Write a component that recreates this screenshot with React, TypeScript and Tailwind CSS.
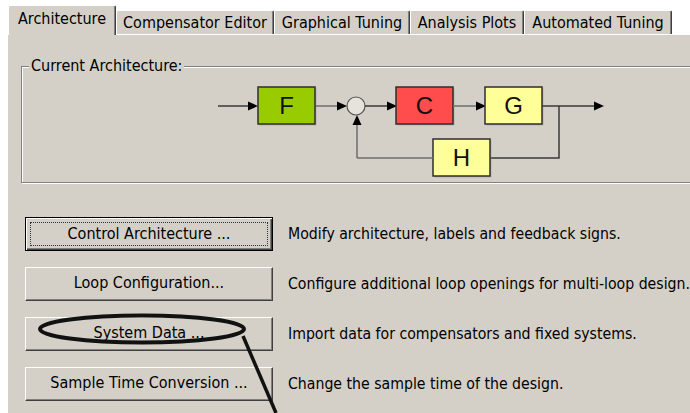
const tabs = [
  { label: "Architecture", w: "w-[108px]", active: true },
  { label: "Compensator Editor", w: "w-[158px]", active: false },
  { label: "Graphical Tuning", w: "w-[136px]", active: false },
  { label: "Analysis Plots", w: "w-[114px]", active: false },
  { label: "Automated Tuning", w: "w-[148px]", active: false },
];

const actions = [
  { label: "Control Architecture ...", desc: "Modify architecture, labels and feedback signs.", isDefault: true },
  { label: "Loop Configuration...", desc: "Configure additional loop openings for multi-loop design.", isDefault: false },
  { label: "System Data ...", desc: "Import data for compensators and fixed systems.", isDefault: false },
  { label: "Sample Time Conversion ...", desc: "Change the sample time of the design.", isDefault: false },
];

const Arrow = ({ x1, y1, x2, y2, color = "#3a3a3a" }: { x1: number; y1: number; x2: number; y2: number; color?: string }) => {
  const dx = x2 - x1;
  const dy = y2 - y1;
  const len = Math.hypot(dx, dy);
  const ux = dx / len;
  const uy = dy / len;
  const bx = x2 - ux * 10;
  const by = y2 - uy * 10;
  const px = -uy * 4.5;
  const py = ux * 4.5;
  return (
    <g>
      <line x1={x1} y1={y1} x2={bx} y2={by} stroke={color} strokeWidth={1.5} />
      <polygon points={`${x2},${y2} ${bx + px},${by + py} ${bx - px},${by - py}`} fill="#000" />
    </g>
  );
};

const Block = ({ x, y, label, fill }: { x: number; y: number; label: string; fill: string }) => (
  <g>
    <rect x={x + 1.5} y={y + 1.5} width={57} height={37} fill="#9a968e" opacity={0.5} />
    <rect x={x} y={y} width={57} height={37} fill={fill} stroke="#2e2e2e" strokeWidth={1.5} />
    <text x={x + 28.5} y={y + 27} textAnchor="middle" fontSize={24} fontFamily="'Liberation Sans', Arial, sans-serif" fill="#111">
      {label}
    </text>
  </g>
);

function Diagram() {
  return (
    <svg width={400} height={96} viewBox="210 84 400 96" className="block ml-[188px] mt-[9px]">
      <Arrow x1={218} y1={106} x2={258} y2={106} />
      <Block x={258} y={87} label="F" fill="#99cc00" />
      <Arrow x1={316} y1={106} x2={347} y2={106} color="#6e6e6e" />
      <circle cx={356} cy={106} r={9} fill="#e6e3dd" stroke="#555" strokeWidth={1.2} />
      <Arrow x1={365} y1={106} x2={397} y2={106} />
      <Block x={396} y={87} label="C" fill="#ff4d4d" />
      <Arrow x1={453} y1={106} x2={486} y2={106} color="#6e6e6e" />
      <Block x={485} y={87} label="G" fill="#ffff99" />
      <Arrow x1={542} y1={106} x2={604} y2={106} />
      <polyline points="559,106 559,158 490,158" fill="none" stroke="#3a3a3a" strokeWidth={1.5} />
      <Block x={433} y={139} label="H" fill="#ffff99" />
      <line x1={433} y1={158} x2={357} y2={158} stroke="#6e6e6e" strokeWidth={1.5} />
      <Arrow x1={357} y1={158} x2={357} y2={115} color="#6e6e6e" />
    </svg>
  );
}

export default function App() {
  return (
    <div
      className="relative w-[690px] h-[413px] overflow-hidden bg-white text-black text-[16px]"
      style={{ fontFamily: "'DejaVu Sans Condensed', 'DejaVu Sans', sans-serif" }}
    >
      <div className="flex flex-col h-full pl-[8px] pt-[5px]">
        {/* tab strip */}
        <div className="flex items-end h-[29px]">
          {tabs.map((t) => (
            <div
              key={t.label}
              className={`${t.w} shrink-0 flex items-center justify-center whitespace-nowrap bg-[#d4d0c8] border-t border-l border-white border-r border-r-[#404040] shadow-[inset_-1px_0_0_#808080] rounded-t-[2px] ${
                t.active ? "h-[30px] -mb-px relative z-10 pb-[3px]" : "h-[24px]"
              }`}
            >
              {t.label}
            </div>
          ))}
        </div>

        {/* panel */}
        <div className="flex-1 bg-[#d4d0c8] border-t border-white">
          <fieldset className="ml-[13px] mt-[22px] w-[700px] pb-[2px] border border-[#808080] shadow-[inset_1px_1px_0_#fff,1px_1px_0_#fff]">
            <legend className="ml-[7px] px-[2px] leading-[18px] bg-[#d4d0c8]">Current Architecture:</legend>
            <Diagram />
          </fieldset>

          <div className="flex flex-col gap-[16px] ml-[17px] mt-[34px]">
            {actions.map((a) => (
              <div key={a.label} className="flex items-center gap-[15px]">
                {a.isDefault ? (
                  <button className="shrink-0 w-[248px] h-[34px] p-[4px] bg-[#d4d0c8] border border-black shadow-[inset_1px_1px_0_#fff,inset_-1px_-1px_0_#404040,inset_-2px_-2px_0_#808080]">
                    <span className="flex items-center justify-center h-full border border-dotted border-[#333]">{a.label}</span>
                  </button>
                ) : (
                  <button className="shrink-0 w-[248px] h-[34px] pb-[2px] flex items-center justify-center bg-[#d4d0c8] border border-t-white border-l-white border-r-[#404040] border-b-[#404040] shadow-[inset_-1px_-1px_0_#808080]">
                    {a.label}
                  </button>
                )}
                <span className="whitespace-nowrap text-[15.7px]">{a.desc}</span>
              </div>
            ))}
          </div>
        </div>
      </div>

      {/* hand-drawn annotation */}
      <svg className="absolute inset-0 pointer-events-none" width={690} height={413}>
        <ellipse cx={142} cy={329} rx={102} ry={13.5} fill="none" stroke="#111" strokeWidth={4} />
        <line x1={243} y1={336} x2={276} y2={413} stroke="#111" strokeWidth={3.5} />
      </svg>
    </div>
  );
}
